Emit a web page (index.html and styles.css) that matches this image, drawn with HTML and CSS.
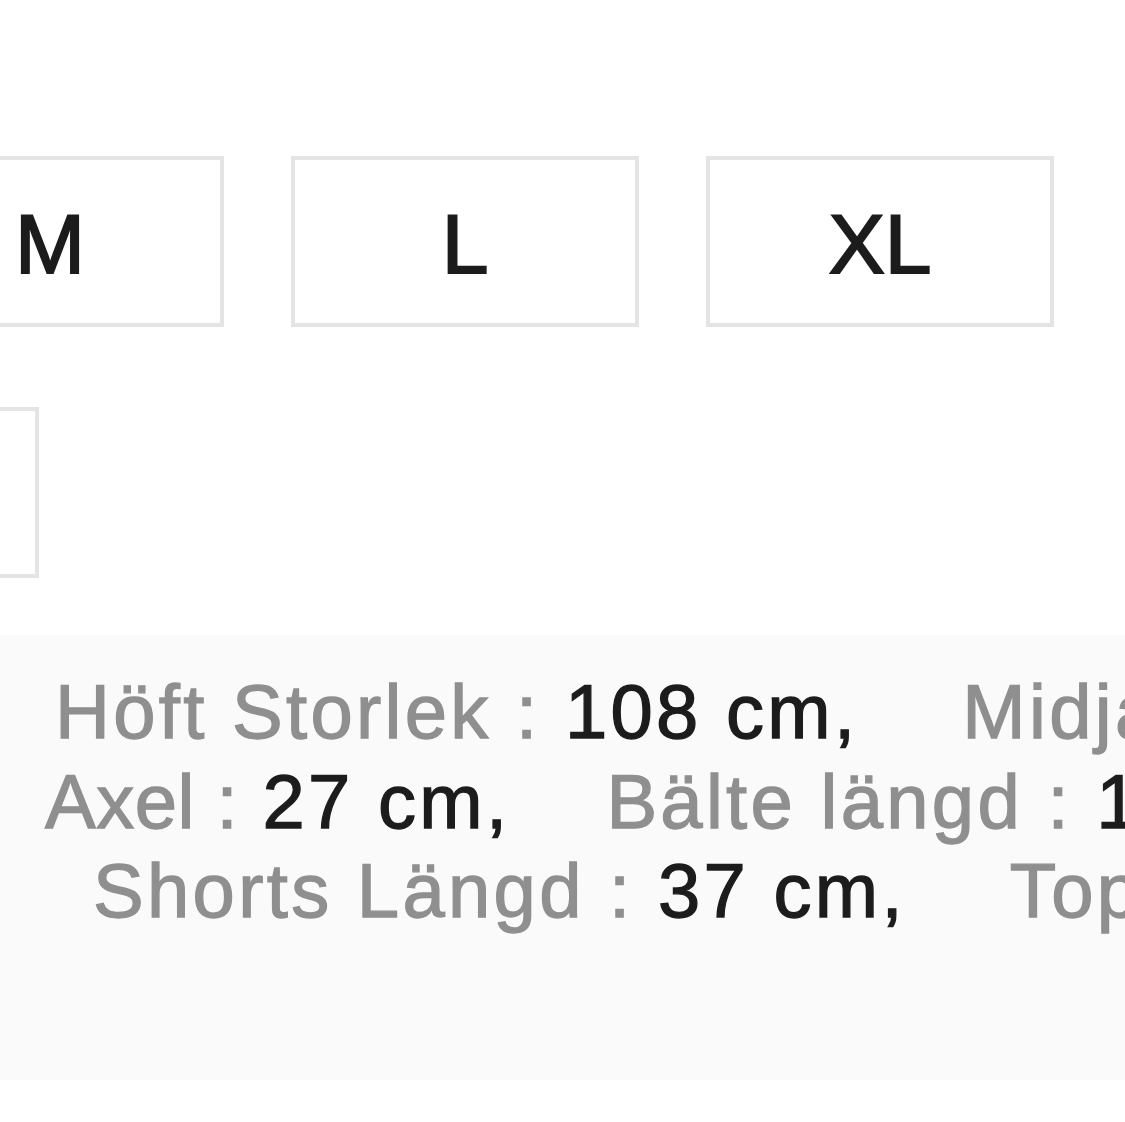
FILE: index.html
```html
<!DOCTYPE html>
<html lang="sv">
<head>
<meta charset="utf-8">
<title>Storlek</title>
<link rel="stylesheet" href="styles.css">
</head>
<body>
<div class="page">
  <div class="sizes">
    <div class="size-row row-one">
      <div class="size-box">M</div>
      <div class="size-box">L</div>
      <div class="size-box">XL</div>
    </div>
    <div class="size-row row-two">
      <div class="size-box">XXL</div>
    </div>
  </div>
  <div class="measure">
    <div class="line line-one">
      <span class="item"><span class="label">Höft Storlek :</span> <span class="value">108 cm,</span></span>
      <span class="item"><span class="label">Midja :</span> <span class="value">68 cm,</span></span>
    </div>
    <div class="line line-two">
      <span class="item"><span class="label label-tight">Axel :</span> <span class="value">27 cm,</span></span>
      <span class="item"><span class="label">Bälte längd :</span> <span class="value">1 cm,</span></span>
    </div>
    <div class="line line-three">
      <span class="item"><span class="label">Shorts Längd :</span> <span class="value">37 cm,</span></span>
      <span class="item"><span class="label">Topp Längd :</span> <span class="value">40 cm</span></span>
    </div>
  </div>
</div>
</body>
</html>
```
FILE: styles.css
```css
html, body {
  margin: 0;
  padding: 0;
  background: #ffffff;
}
.page {
  width: 1125px;
  height: 1122px;
  overflow: hidden;
  font-family: "Liberation Sans", Arial, sans-serif;
}
.sizes {
  padding-top: 156px;
  display: flex;
  flex-direction: column;
  gap: 80px;
}
.size-row {
  display: flex;
  gap: 67px;
}
.row-one {
  margin-left: -124px;
}
.row-two {
  margin-left: -309px;
}
.size-box {
  flex: 0 0 auto;
  box-sizing: border-box;
  width: 348px;
  height: 171px;
  border: 4px solid #e4e4e4;
  display: flex;
  align-items: center;
  justify-content: center;
  font-size: 84px;
  color: #1c1c1c;
  -webkit-text-stroke: 2px #1c1c1c;
  padding-top: 6px;
}
.measure {
  margin-top: 57px;
  background: #fafafa;
  padding: 32px 0 144px;
  font-size: 76px;
  line-height: 89.5px;
  letter-spacing: 3.3px;
  white-space: nowrap;
}
.line {
  display: flex;
  gap: 104px;
}
.line-one { padding-left: 55px; }
.line-two { padding-left: 45px; gap: 96px; }
.line-three { padding-left: 93px; }
.label {
  color: #8f8f8f;
  -webkit-text-stroke: 1.3px #8f8f8f;
}
.label-tight {
  letter-spacing: 0.5px;
}
.value {
  color: #1c1c1c;
  -webkit-text-stroke: 1.3px #1c1c1c;
}
```
